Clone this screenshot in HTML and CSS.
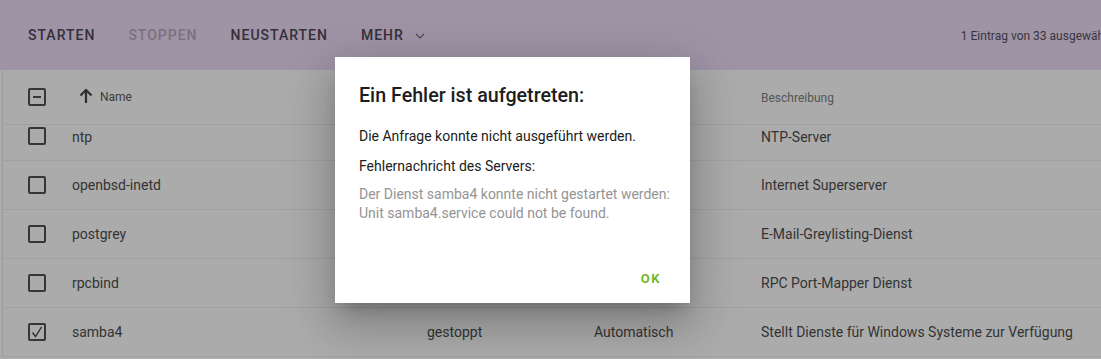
FILE: index.html
```html
<!DOCTYPE html>
<html lang="de">
<head>
<meta charset="utf-8">
<link rel="stylesheet" href="styles.css">
</head>
<body>
<div class="page">
  <div class="toolbar">
    <div class="actions">
      <span class="btn">STARTEN</span>
      <span class="btn disabled">STOPPEN</span>
      <span class="btn">NEUSTARTEN</span>
      <span class="btn more">MEHR
        <svg class="chev" width="10" height="6" viewBox="0 0 10 6"><path d="M1 1l4 4 4-4" fill="none" stroke="#4a4450" stroke-width="1.1"/></svg>
      </span>
    </div>
    <div class="count">1 Eintrag von 33 ausgewählt</div>
  </div>
  <div class="table">
    <div class="row head">
      <div class="cell cb"><span class="box"><span class="minus"></span></span></div>
      <div class="cell name-h">
        <svg class="arrow" width="14" height="16" viewBox="0 0 14 16"><path d="M7 15V2M1.5 7.5L7 2l5.5 5.5" fill="none" stroke="#2f2f2f" stroke-width="2.2"/></svg>
        <span>Name</span>
      </div>
      <div class="cell"></div>
      <div class="cell"></div>
      <div class="cell hdr">Beschreibung</div>
    </div>
    <div class="row first">
      <div class="cell cb"><span class="box"></span></div>
      <div class="cell">ntp</div>
      <div class="cell"></div>
      <div class="cell"></div>
      <div class="cell">NTP-Server</div>
    </div>
    <div class="row">
      <div class="cell cb"><span class="box"></span></div>
      <div class="cell">openbsd-inetd</div>
      <div class="cell"></div>
      <div class="cell"></div>
      <div class="cell">Internet Superserver</div>
    </div>
    <div class="row">
      <div class="cell cb"><span class="box"></span></div>
      <div class="cell">postgrey</div>
      <div class="cell"></div>
      <div class="cell"></div>
      <div class="cell">E-Mail-Greylisting-Dienst</div>
    </div>
    <div class="row">
      <div class="cell cb"><span class="box"></span></div>
      <div class="cell">rpcbind</div>
      <div class="cell"></div>
      <div class="cell"></div>
      <div class="cell">RPC Port-Mapper Dienst</div>
    </div>
    <div class="row">
      <div class="cell cb"><span class="box"><svg width="14" height="14" viewBox="0 0 14 14"><path d="M2.5 7.5l3 4L11.5 2" fill="none" stroke="#2f2f2f" stroke-width="1.4"/></svg></span></div>
      <div class="cell">samba4</div>
      <div class="cell">gestoppt</div>
      <div class="cell">Automatisch</div>
      <div class="cell">Stellt Dienste für Windows Systeme zur Verfügung</div>
    </div>
  </div>

  <div class="dialog">
    <h2 class="title">Ein Fehler ist aufgetreten:</h2>
    <p class="msg">Die Anfrage konnte nicht ausgeführt werden.</p>
    <p class="msg last">Fehlernachricht des Servers:</p>
    <p class="detail">Der Dienst samba4 konnte nicht gestartet werden:<br>Unit samba4.service could not be found.</p>
    <div class="dlg-actions"><span class="ok">OK</span></div>
  </div>
</div>
</body>
</html>
```

FILE: styles.css
```css
html, body {
  margin: 0;
  padding: 0;
  background: #ababab;
  overflow: hidden;
}
body {
  font-family: Roboto, "Liberation Sans", sans-serif;
  color: #333;
}
.page {
  position: relative;
  width: 1101px;
  height: 359px;
  overflow: hidden;
}
.toolbar {
  height: 70px;
  background: #9e94a6;
  display: flex;
  align-items: center;
  justify-content: space-between;
  white-space: nowrap;
}
.actions {
  display: flex;
  align-items: center;
  padding-left: 28px;
  gap: 33px;
}
.btn {
  font-size: 14px;
  font-weight: 500;
  letter-spacing: 1px;
  color: #352f3a;
  display: flex;
  align-items: center;
}
.btn.disabled { color: #7a7180; }
.more { gap: 11px; }
.chev { margin-top: 2px; }
.count {
  font-size: 12px;
  color: #3a3540;
  margin-right: -10px;
  padding-top: 1px;
}
.table {
  margin-left: 2px;
  border-left: 1px solid #9c9c9c;
  background: #ababab;
}
.row {
  display: grid;
  grid-template-columns: 69px 355px 167px 167px 1fr;
  height: 48px;
  align-items: center;
  border-bottom: 1px solid #a0a0a0;
  font-size: 14px;
  color: #333;
  white-space: nowrap;
}
.row.head {
  height: 54px;
  font-size: 12px;
  color: #3b3b3b;
}
.row.first { height: 35px; align-items: start; }
.row.first .cell { padding-top: 4px; }
.row.first .cb { padding-top: 2px; }
.cell.cb { padding-left: 25px; display: flex; }
.box {
  width: 14px;
  height: 14px;
  border: 2px solid #363636;
  border-radius: 2px;
  display: flex;
  align-items: center;
  justify-content: center;
}
.minus {
  width: 8px;
  height: 2px;
  background: #363636;
}
.name-h {
  display: flex;
  align-items: center;
  gap: 7px;
  padding-left: 7px;
}
.arrow { margin-top: -2px; }
.hdr { color: #555; padding-top: 2px; }

.dialog {
  position: absolute;
  left: 335px;
  top: 57px;
  width: 355px;
  height: 246px;
  box-sizing: border-box;
  background: #fff;
  padding: 27px 14px 0 24px;
  box-shadow: 0 11px 15px -7px rgba(0,0,0,.2), 0 24px 38px 3px rgba(0,0,0,.14), 0 9px 46px 8px rgba(0,0,0,.12);
  display: flex;
  flex-direction: column;
}
.title {
  margin: 0 0 20px 0;
  font-size: 19.7px;
  font-weight: 500;
  color: #1d1d1d;
  line-height: 24px;
}
.msg {
  margin: 0 0 13px 0;
  font-size: 14px;
  line-height: 17px;
  color: #212121;
}
.msg.last { margin-bottom: 10px; }
.detail {
  margin: 0;
  font-size: 14px;
  line-height: 19px;
  color: #949494;
  white-space: nowrap;
}
.dlg-actions {
  margin-top: auto;
  height: 50px;
  display: flex;
  justify-content: flex-end;
  align-items: center;
  padding-right: 15px;
}
.ok {
  font-size: 13px;
  font-weight: 700;
  letter-spacing: 1.5px;
  color: #72b82a;
}
```
